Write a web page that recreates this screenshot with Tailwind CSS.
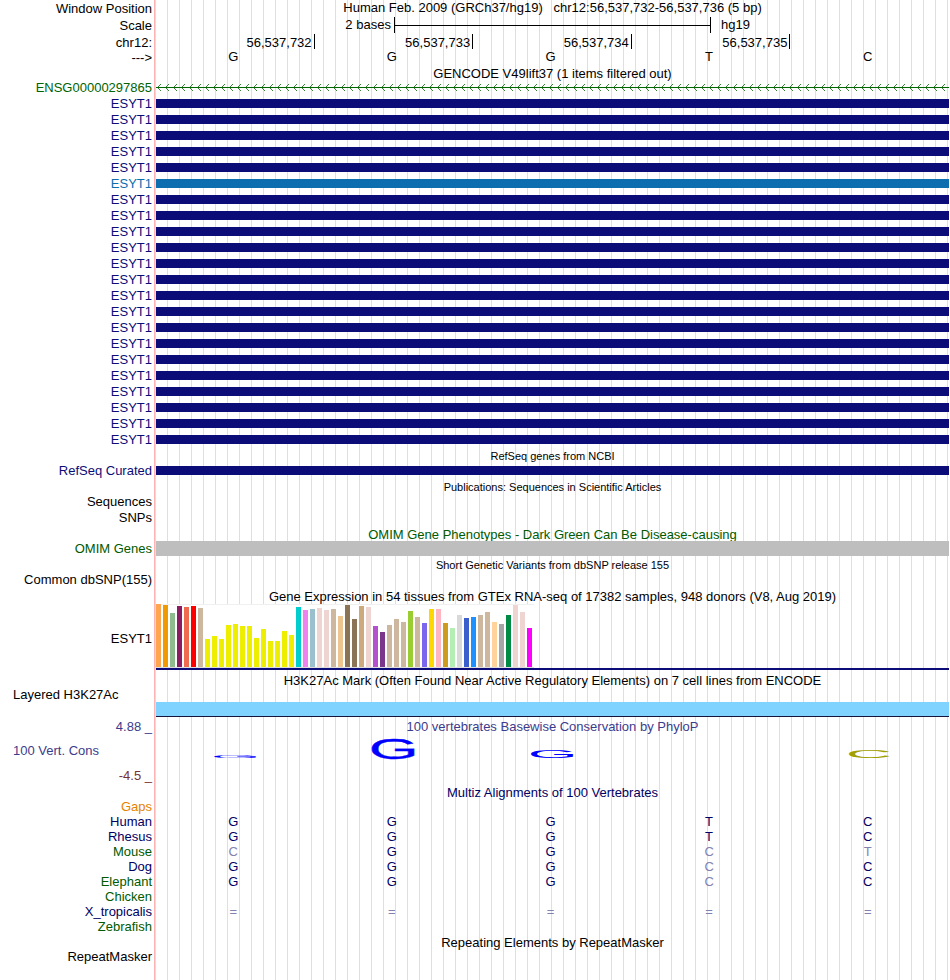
<!DOCTYPE html>
<html lang="en">
<head>
<meta charset="utf-8">
<title>hg19 chr12:56,537,732-56,537,736</title>
<script src="https://cdn.jsdelivr.net/npm/@tailwindcss/browser@4"></script>
</head>
<body class="bg-white">
<main class="min-h-screen pr-px font-['Liberation_Sans',Arial,sans-serif] text-[13px] leading-4 text-black bg-[linear-gradient(90deg,#fff_154px,#ffb4b4_154px,#ffb4b4_155px,transparent_155px),repeating-linear-gradient(90deg,transparent_0px,transparent_11px,#dcdcfa_11px,#dcdcfa_12px)]">

  <header class="leading-[18px]">
    <div class="grid h-[17px] grid-cols-[156px_1fr]">
      <div class="pr-1 text-right">Window Position</div>
      <h1 class="whitespace-pre text-center leading-4">Human Feb. 2009 (GRCh37/hg19)   chr12:56,537,732-56,537,736 (5 bp)</h1>
    </div>
    <div class="grid h-[17px] grid-cols-[156px_1fr]">
      <div class="pr-1 text-right">Scale</div>
      <div class="grid grid-cols-[3fr_4fr_3fr] leading-4">
        <div class="pr-[3px] text-right">2 bases</div>
        <div class="flex h-4 items-center border-x border-black"><div class="h-px w-full bg-black"></div></div>
        <div class="pl-[10px]">hg19</div>
      </div>
    </div>
    <div class="grid h-4 grid-cols-[156px_1fr]">
      <div class="pr-1 text-right">chr12:</div>
      <div class="grid h-[15px] grid-cols-5 grid-rows-[15px] text-right leading-[17px]">
        <div class="border-r border-black pr-[2px]">56,537,732</div>
        <div class="border-r border-black pr-[2px]">56,537,733</div>
        <div class="border-r border-black pr-[2px]">56,537,734</div>
        <div class="border-r border-black pr-[2px]">56,537,735</div>
        <div></div>
      </div>
    </div>
    <div class="grid h-4 grid-cols-[156px_1fr] leading-[14px]">
      <div class="pr-1 text-right leading-4">---&gt;</div>
      <div class="grid grid-cols-5 text-center">
        <div class="pr-1">G</div><div class="pr-1">G</div><div class="pr-1">G</div><div class="pr-1">T</div><div class="pr-1">C</div>
      </div>
    </div>
  </header>

  <section>
    <h2 class="h-[14px] pl-[156px] text-center">GENCODE V49lift37 (1 items filtered out)</h2>
    <div class="grid h-4 grid-cols-[156px_1fr] text-[#006400]">
      <div class="pr-1 text-right">ENSG00000297865</div>
      <svg class="h-4 w-full" aria-hidden="true">
        <defs>
          <pattern id="strand" width="8" height="16" patternUnits="userSpaceOnUse">
            <path d="M0 7.5H8" fill="none" stroke="#006400"/>
            <path d="M5 4L1.5 7.5L5 11" fill="none" stroke="#006400" stroke-width="0.8"/>
          </pattern>
        </defs>
        <rect width="100%" height="16" fill="url(#strand)"/>
      </svg>
    </div>
    <div id="transcripts"></div>
  </section>

  <section>
    <h2 class="h-[15px] pl-[156px] text-center text-[11px]">RefSeq genes from NCBI</h2>
    <div class="grid h-4 grid-cols-[156px_1fr] text-[#0c0c78]">
      <div class="pr-1 text-right">RefSeq Curated</div>
      <div class="pt-[3px]"><div class="h-[9px] bg-[#0c0c78]"></div></div>
    </div>
  </section>

  <section>
    <h2 class="h-[15px] pl-[156px] text-center text-[11px]">Publications: Sequences in Scientific Articles</h2>
    <div class="w-[156px] pr-1 text-right">Sequences</div>
    <div class="w-[156px] pr-1 text-right">SNPs</div>
  </section>

  <section class="text-[#005a00]">
    <h2 class="h-[15px] pl-[156px] text-center leading-[18px]">OMIM Gene Phenotypes - Dark Green Can Be Disease-causing</h2>
    <div class="grid h-4 grid-cols-[156px_1fr]">
      <div class="pr-1 text-right">OMIM Genes</div>
      <div class="relative h-[15px] bg-[#bebebe]"></div>
    </div>
  </section>

  <section>
    <h2 class="h-[15px] pl-[156px] text-center text-[11px]">Short Genetic Variants from dbSNP release 155</h2>
    <div class="w-[156px] pr-1 text-right">Common dbSNP(155)</div>
  </section>

  <section>
    <h2 class="h-4 pl-[156px] text-center leading-[18px]">Gene Expression in 54 tissues from GTEx RNA-seq of 17382 samples, 948 donors (V8, Aug 2019)</h2>
    <div class="grid grid-cols-[156px_1fr]">
      <div class="self-center pr-1 pt-1 text-right">ESYT1</div>
      <div class="border-b-2 border-[#0c0c78]">
        <div id="tissues" class="flex h-16 w-[378px] items-end gap-[2px] border-b border-[#dcdcdc] bg-white bg-[linear-gradient(#f0f0f0_1px,transparent_1px)]"></div>
      </div>
    </div>
  </section>

  <section class="pt-[2px]">
    <h2 class="h-4 pl-[156px] text-center leading-[17px]">H3K27Ac Mark (Often Found Near Active Regulatory Elements) on 7 cell lines from ENCODE</h2>
    <div class="h-[14px] w-[156px] pl-[13px] leading-[14px]">Layered H3K27Ac</div>
    <div class="pl-[156px]"><div class="h-[15px] border-b border-[#14143c] bg-[#80d2ff]"></div></div>
  </section>

  <section>
    <div class="grid h-[19px] grid-cols-[156px_1fr] pt-[2px] text-[#3c3c8c]">
      <div class="pr-1 text-right">4.88 _</div>
      <h2 class="text-center">100 vertebrates Basewise Conservation by PhyloP</h2>
    </div>
    <div class="grid h-8 grid-cols-[156px_1fr] text-[#3c3c8c]">
      <div class="pl-[13px] pt-[7px]">100 Vert. Cons</div>
      <div class="grid h-[23px] grid-cols-5 items-end justify-items-center">
        <svg class="mb-px h-[3px] w-[43px] overflow-visible" viewBox="5 -70 67 71" preserveAspectRatio="none"><text class="font-['Liberation_Sans',Arial,sans-serif] text-[100px]" fill="#0000ff">G</text></svg>
        <svg class="h-[21px] w-[43px] overflow-visible" viewBox="5 -70 67 71" preserveAspectRatio="none"><text class="font-['Liberation_Sans',Arial,sans-serif] text-[100px]" fill="#0000ff" stroke="#0000ff">G</text></svg>
        <svg class="mb-px h-2 w-[43px] overflow-visible" viewBox="5 -70 67 71" preserveAspectRatio="none"><text class="font-['Liberation_Sans',Arial,sans-serif] text-[100px]" fill="#0000ff">G</text></svg>
        <div></div>
        <svg class="mb-px h-2 w-[41px] overflow-visible" viewBox="5 -70 64 71" preserveAspectRatio="none"><text class="font-['Liberation_Sans',Arial,sans-serif] text-[100px]" fill="#a0a000">C</text></svg>
      </div>
    </div>
    <div class="h-[17px] w-[156px] pr-1 text-right text-[#783232]">-4.5 _</div>
  </section>

  <section class="text-[#000064]">
    <h2 class="h-[14px] pl-[156px] text-center">Multiz Alignments of 100 Vertebrates</h2>
    <table class="w-full table-fixed border-collapse leading-[15px]">
      <colgroup><col class="w-[156px]"><col><col><col><col><col></colgroup>
      <tbody id="alignments"></tbody>
    </table>
  </section>

  <section>
    <h2 class="h-[15px] pl-[156px] text-center leading-[18px]">Repeating Elements by RepeatMasker</h2>
    <div class="w-[156px] pr-1 text-right">RepeatMasker</div>
  </section>
</main>

<script>
// Transcript models: one exon bar per isoform; the sixth has its own colour class.
document.getElementById('transcripts').innerHTML = Array.from({ length: 22 }, (_, i) =>
  i === 5
    ? '<div class="grid h-4 grid-cols-[156px_1fr]"><div class="pr-1 text-right text-[#0c6eaf]">ESYT1</div><div class="pt-[3px]"><div class="h-[9px] bg-[#0c6eaf]"></div></div></div>'
    : '<div class="grid h-4 grid-cols-[156px_1fr]"><div class="pr-1 text-right text-[#0c0c78]">ESYT1</div><div class="pt-[3px]"><div class="h-[9px] bg-[#0c0c78]"></div></div></div>'
).join('');

// Tissue expression: [height, colour]
const Y = '#eeee00', T = '#cdb79e', P = '#eed5d2';
const tissues = [
  [63,'#ffa54f'],[62,'#ee9a00'],[54,'#8fbc8f'],[61,'#8b1c62'],[60,'#ee6a50'],[61,'#ff0000'],[59,T],
  [28,Y],[31,Y],[28,Y],[42,Y],[43,Y],[41,Y],[41,Y],[29,Y],[38,Y],[26,Y],[26,Y],[36,Y],[32,Y],
  [60,'#00cdcd'],[57,'#ee82ee'],[58,'#9ac0cd'],[59,P],[57,P],[58,T],[51,'#eec591'],[62,'#8b7355'],
  [48,'#8b7355'],[61,'#cdaa7d'],[60,P],[41,'#b452cd'],[35,'#7a378b'],[42,T],[48,T],[45,T],
  [56,'#9acd32'],[50,T],[44,'#7a67ee'],[58,'#ffd700'],[58,'#ffb6c1'],[44,'#cd9b1d'],[39,'#b4eeb4'],
  [52,'#d9d9d9'],[49,'#3a5fcd'],[50,'#1e90ff'],[52,T],[55,T],[45,'#ffd39b'],[43,'#a6a6a6'],
  [52,'#008b45'],[62,P],[55,P],[39,'#ff00ff']
];
document.getElementById('tissues').innerHTML = tissues.map(([h, c]) =>
  `<div class="w-[5px] shrink-0" style="height:${h}px;background:${c}"></div>`).join('');

// Alignment rows; mismatching bases and unalignable positions are drawn faded.
const human = 'GGGTC';
const rows = [
  ['Gaps', 'text-[#e68200]', '     '],
  ['Human', 'text-[#000064]', 'GGGTC'],
  ['Rhesus', 'text-[#000064]', 'GGGTC'],
  ['Mouse', 'text-[#005a00]', 'CGGCT'],
  ['Dog', 'text-[#000064]', 'GGGCC'],
  ['Elephant', 'text-[#005a00]', 'GGGCC'],
  ['Chicken', 'text-[#005a00]', '     '],
  ['X_tropicalis', 'text-[#000064]', '====='],
  ['Zebrafish', 'text-[#005a00]', '     ']
];
document.getElementById('alignments').innerHTML = rows.map(([name, colour, seq]) =>
  `<tr class="h-[15px]"><th scope="row" class="p-0 pr-1 text-right font-normal ${colour}">${name}</th>` +
  [...seq].map((b, i) => b === human[i]
    ? `<td class="p-0 pr-1 text-center">${b}</td>`
    : `<td class="p-0 pr-1 text-center text-[#8282af]">${b}</td>`).join('') + '</tr>').join('');
</script>
</body>
</html>
